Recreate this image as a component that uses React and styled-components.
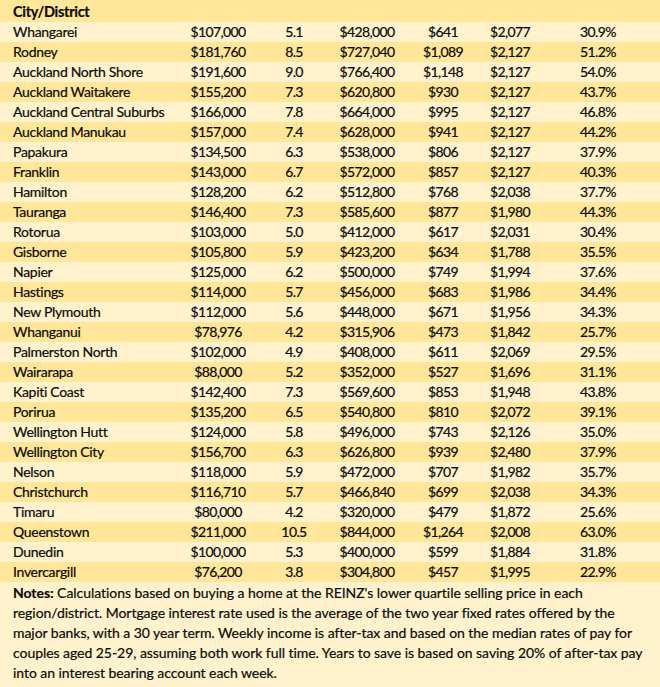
import React from "react";
import styled, { createGlobalStyle } from "styled-components";

const Global = createGlobalStyle`
  html, body { margin: 0; padding: 0; background: #fff2cc; }
  body {
    font-family: Lato, "Liberation Sans", sans-serif;
    color: #0a0a0a;
    -webkit-text-stroke: 0.2px #0a0a0a;
  }
`;

const rows = [
  ["Whangarei", "$107,000", "5.1", "$428,000", "$641", "$2,077", "30.9%"],
  ["Rodney", "$181,760", "8.5", "$727,040", "$1,089", "$2,127", "51.2%"],
  ["Auckland North Shore", "$191,600", "9.0", "$766,400", "$1,148", "$2,127", "54.0%"],
  ["Auckland Waitakere", "$155,200", "7.3", "$620,800", "$930", "$2,127", "43.7%"],
  ["Auckland Central Suburbs", "$166,000", "7.8", "$664,000", "$995", "$2,127", "46.8%"],
  ["Auckland Manukau", "$157,000", "7.4", "$628,000", "$941", "$2,127", "44.2%"],
  ["Papakura", "$134,500", "6.3", "$538,000", "$806", "$2,127", "37.9%"],
  ["Franklin", "$143,000", "6.7", "$572,000", "$857", "$2,127", "40.3%"],
  ["Hamilton", "$128,200", "6.2", "$512,800", "$768", "$2,038", "37.7%"],
  ["Tauranga", "$146,400", "7.3", "$585,600", "$877", "$1,980", "44.3%"],
  ["Rotorua", "$103,000", "5.0", "$412,000", "$617", "$2,031", "30.4%"],
  ["Gisborne", "$105,800", "5.9", "$423,200", "$634", "$1,788", "35.5%"],
  ["Napier", "$125,000", "6.2", "$500,000", "$749", "$1,994", "37.6%"],
  ["Hastings", "$114,000", "5.7", "$456,000", "$683", "$1,986", "34.4%"],
  ["New Plymouth", "$112,000", "5.6", "$448,000", "$671", "$1,956", "34.3%"],
  ["Whanganui", "$78,976", "4.2", "$315,906", "$473", "$1,842", "25.7%"],
  ["Palmerston North", "$102,000", "4.9", "$408,000", "$611", "$2,069", "29.5%"],
  ["Wairarapa", "$88,000", "5.2", "$352,000", "$527", "$1,696", "31.1%"],
  ["Kapiti Coast", "$142,400", "7.3", "$569,600", "$853", "$1,948", "43.8%"],
  ["Porirua", "$135,200", "6.5", "$540,800", "$810", "$2,072", "39.1%"],
  ["Wellington Hutt", "$124,000", "5.8", "$496,000", "$743", "$2,126", "35.0%"],
  ["Wellington City", "$156,700", "6.3", "$626,800", "$939", "$2,480", "37.9%"],
  ["Nelson", "$118,000", "5.9", "$472,000", "$707", "$1,982", "35.7%"],
  ["Christchurch", "$116,710", "5.7", "$466,840", "$699", "$2,038", "34.3%"],
  ["Timaru", "$80,000", "4.2", "$320,000", "$479", "$1,872", "25.6%"],
  ["Queenstown", "$211,000", "10.5", "$844,000", "$1,264", "$2,008", "63.0%"],
  ["Dunedin", "$100,000", "5.3", "$400,000", "$599", "$1,884", "31.8%"],
  ["Invercargill", "$76,200", "3.8", "$304,800", "$457", "$1,995", "22.9%"],
];

const widths = [180, 76, 76, 70, 82, 52, 124];

const Sheet = styled.div`
  width: 660px;
  background: #fff2cc;
  font-size: 14px;
`;

const Table = styled.table`
  width: 660px;
  border-collapse: collapse;
  table-layout: fixed;
`;

const HeadRow = styled.tr`
  height: 22px;
  background: #ffe699;
`;

const Row = styled.tr`
  height: 20px;
  background: ${(p) => (p.$dark ? "#ffe699" : "#fff2cc")};
`;

const NameCell = styled.td`
  padding: 0 0 0 13px;
  text-align: left;
  white-space: nowrap;
  line-height: 20px;
  letter-spacing: -0.3px;
  font-weight: ${(p) => (p.$bold ? 700 : 400)};
  font-size: ${(p) => (p.$bold ? "14.5px" : "14px")};
  vertical-align: ${(p) => (p.$bold ? "bottom" : "middle")};
`;

const NumCell = styled.td`
  padding: 0;
  text-align: center;
  white-space: nowrap;
  line-height: 20px;
  letter-spacing: -0.6px;
`;

const Notes = styled.p`
  margin: 0;
  padding: 1px 13px 4px 13px;
  line-height: 20px;
  white-space: nowrap;
  letter-spacing: -0.05px;
`;

const Bold = styled.b`
  font-weight: 700;
`;

export default function App() {
  return (
    <Sheet>
      <Global />
      <Table>
        <colgroup>
          {widths.map((w, i) => (
            <col key={i} style={{ width: w }} />
          ))}
        </colgroup>
        <thead>
          <HeadRow>
            <NameCell as="th" $bold>City/District</NameCell>
            <NumCell as="th" />
            <NumCell as="th" />
            <NumCell as="th" />
            <NumCell as="th" />
            <NumCell as="th" />
            <NumCell as="th" />
          </HeadRow>
        </thead>
        <tbody>
          {rows.map((r, i) => (
            <Row key={r[0]} $dark={i % 2 === 1}>
              <NameCell>{r[0]}</NameCell>
              {r.slice(1).map((v, j) => (
                <NumCell key={j}>{v}</NumCell>
              ))}
            </Row>
          ))}
        </tbody>
      </Table>
      <Notes>
        <Bold>Notes:</Bold> Calculations based on buying a home at the REINZ's lower quartile selling price in each
        <br />
        region/district. Mortgage interest rate used is the average of the two year fixed rates offered by the
        <br />
        major banks, with a 30 year term. Weekly income is after-tax and based on the median rates of pay for
        <br />
        couples aged 25-29, assuming both work full time. Years to save is based on saving 20% of after-tax pay
        <br />
        into an interest bearing account each week.
      </Notes>
    </Sheet>
  );
}
